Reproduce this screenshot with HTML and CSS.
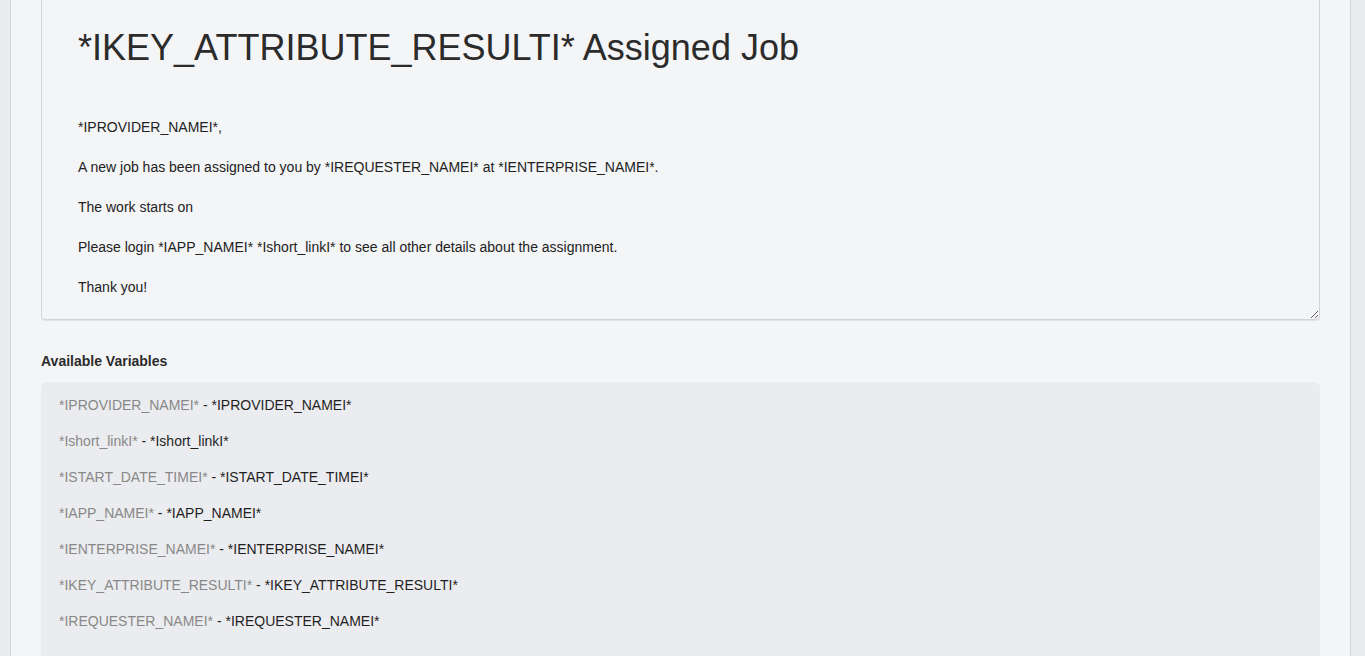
FILE: index.html
```html
<!DOCTYPE html>
<html>
<head>
<meta charset="utf-8">
<link rel="stylesheet" href="styles.css">
</head>
<body>
<div class="panel">
  <div class="editor">
    <h1 class="editor-title">*IKEY_ATTRIBUTE_RESULTI* Assigned Job</h1>
    <p class="editor-p">*IPROVIDER_NAMEI*,</p>
    <p class="editor-p">A new job has been assigned to you by *IREQUESTER_NAMEI* at *IENTERPRISE_NAMEI*.</p>
    <p class="editor-p">The work starts on</p>
    <p class="editor-p">Please login *IAPP_NAMEI* *Ishort_linkI* to see all other details about the assignment.</p>
    <p class="editor-p">Thank you!</p>
  </div>
  <div class="vars-label">Available Variables</div>
  <div class="vars">
    <div class="var"><span class="var-key">*IPROVIDER_NAMEI*</span> - *IPROVIDER_NAMEI*</div>
    <div class="var"><span class="var-key">*Ishort_linkI*</span> - *Ishort_linkI*</div>
    <div class="var"><span class="var-key">*ISTART_DATE_TIMEI*</span> - *ISTART_DATE_TIMEI*</div>
    <div class="var"><span class="var-key">*IAPP_NAMEI*</span> - *IAPP_NAMEI*</div>
    <div class="var"><span class="var-key">*IENTERPRISE_NAMEI*</span> - *IENTERPRISE_NAMEI*</div>
    <div class="var"><span class="var-key">*IKEY_ATTRIBUTE_RESULTI*</span> - *IKEY_ATTRIBUTE_RESULTI*</div>
    <div class="var"><span class="var-key">*IREQUESTER_NAMEI*</span> - *IREQUESTER_NAMEI*</div>
    <div class="var-spacer"></div>
  </div>
</div>
</body>
</html>
```
FILE: styles.css
```css
html, body {
  margin: 0;
  padding: 0;
}
body {
  background: #ebecf0;
  font-family: "Liberation Sans", Arial, sans-serif;
  color: #222;
  overflow: hidden;
  height: 656px;
}
.panel {
  margin-top: -40px;
  margin-left: 10px;
  width: 1279px;
  padding: 30px;
  background: #f4f5f7;
  border-left: 1px solid #d3d4d7;
  border-right: 1px solid #d3d4d7;
}
.editor {
  border: 1px solid #d2d3d6;
  border-radius: 4px;
  box-shadow: 0 1px 0 #e2e3e6;
  padding: 35px 36px 22px 36px;
  resize: vertical;
  overflow: auto;
}
.editor-title {
  margin: 0 0 47px 0;
  font-size: 36px;
  line-height: 44px;
  font-weight: normal;
  color: #2b2b2b;
}
.editor-p {
  margin: 0 0 20px 0;
  font-size: 14px;
  line-height: 20px;
  color: #222;
}
.editor-p:last-child {
  margin-bottom: 0;
}
.vars-label {
  margin-top: 31px;
  font-size: 14px;
  line-height: 20px;
  font-weight: bold;
  color: #2b2b2b;
}
.vars {
  margin-top: 11px;
  background: #ebecef;
  border-radius: 6px;
  padding: 13px 18px 40px 18px;
  display: flex;
  flex-direction: column;
  gap: 16px;
}
.var {
  font-size: 14px;
  line-height: 20px;
  color: #1f1f1f;
}
.var-key {
  color: #888;
}
.var-spacer {
  height: 20px;
}
```
